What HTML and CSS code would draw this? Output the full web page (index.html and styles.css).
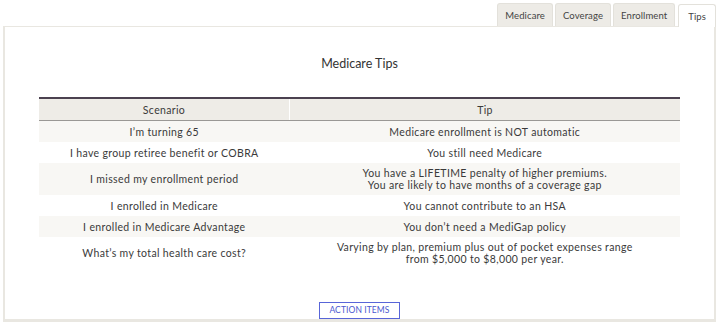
FILE: index.html
```html
<!DOCTYPE html>
<html lang="en">
<head>
  <meta charset="UTF-8" />
  <title>Medicare Tips</title>
  <link rel="stylesheet" href="styles.css">
</head>
<body>
  <div class="page">
    <!-- Tabs -->
    <div class="tabs">
      <div class="tab">Medicare</div>
      <div class="tab">Coverage</div>
      <div class="tab">Enrollment</div>
      <div class="tab active">Tips</div>
    </div>

    <!-- Panel -->
    <div class="panel">
      <h2 class="title">Medicare Tips</h2>
      <table class="tips">
        <thead>
          <tr>
            <th>Scenario</th>
            <th>Tip</th>
          </tr>
        </thead>
        <tbody>
          <tr>
            <td>I’m turning 65</td>
            <td>Medicare enrollment is NOT automatic</td>
          </tr>
          <tr>
            <td>I have group retiree benefit or COBRA</td>
            <td>You still need Medicare</td>
          </tr>
          <tr class="multi">
            <td>I missed my enrollment period</td>
            <td>You have a LIFETIME penalty of higher premiums.<br>You are likely to have months of a coverage gap</td>
          </tr>
          <tr>
            <td>I enrolled in Medicare</td>
            <td>You cannot contribute to an HSA</td>
          </tr>
          <tr>
            <td>I enrolled in Medicare Advantage</td>
            <td>You don’t need a MediGap policy</td>
          </tr>
          <tr class="tall">
            <td>What’s my total health care cost?</td>
            <td>Varying by plan, premium plus out of pocket expenses range<br>from $5,000 to $8,000 per year.</td>
          </tr>
        </tbody>
      </table>
      <div class="actions">
        <button class="action-btn">ACTION ITEMS</button>
      </div>
    </div>
  </div>
</body>
</html>
```

FILE: styles.css
```css
body {
  margin: 0;
  font-family: 'Lato', 'Open Sans', sans-serif;
  color: #3a3a3a;
  background: #ffffff;
}

.page {
  padding: 3px 4px 0 3px;
}

.tabs {
  display: flex;
  justify-content: flex-end;
  gap: 2px;
  height: 23px;
}

.tab {
  background: #edebe6;
  border: 1px solid #e3e1db;
  border-bottom: none;
  border-radius: 3px 3px 0 0;
  padding: 0 7px;
  font-size: 9.5px;
  letter-spacing: 0.1px;
  line-height: 23px;
  color: #444;
}

.tab.active {
  background: #fff;
  border-color: #e3e1db;
  position: relative;
  top: 1px;
  margin-left: 1px;
  padding: 0 9px;
}

.panel {
  border: 2px solid #e9e7e1;
  border-top-width: 1px;
  border-bottom-width: 3px;
  height: 296px;
  box-sizing: border-box;
  padding: 0 34px;
}

.title {
  margin: 29px 0 26px;
  text-align: center;
  font-size: 12.5px;
  font-weight: 400;
  color: #333;
}

.tips {
  width: 100%;
  border-collapse: collapse;
  border-top: 2px solid #4b4150;
  font-size: 10.5px;
  letter-spacing: 0.35px;
  text-align: center;
}

.tips th {
  background: #eeece7;
  font-weight: 400;
  height: 21px;
  padding: 0;
  border-bottom: 1px solid #9a9895;
}

.tips th:first-child {
  width: 250px;
  border-right: 1px solid #ffffff;
}

.tips td {
  padding: 5px 8px 4px;
  line-height: 12px;
}

.tips tbody tr:nth-child(odd) {
  background: #f8f7f4;
}

.tips tr.multi td {
  padding: 4px 8px;
}

.tips tr.tall td {
  padding: 4px 8px 3px;
}

.actions {
  display: flex;
  justify-content: center;
  margin-top: 34px;
}

.action-btn {
  background: #fff;
  border: 1px solid #5865d8;
  color: #4a57d0;
  font-family: 'Lato', sans-serif;
  font-size: 8.5px;
  padding: 0 9px;
  height: 17px;
  line-height: 15px;
  letter-spacing: 0.1px;
}
```
